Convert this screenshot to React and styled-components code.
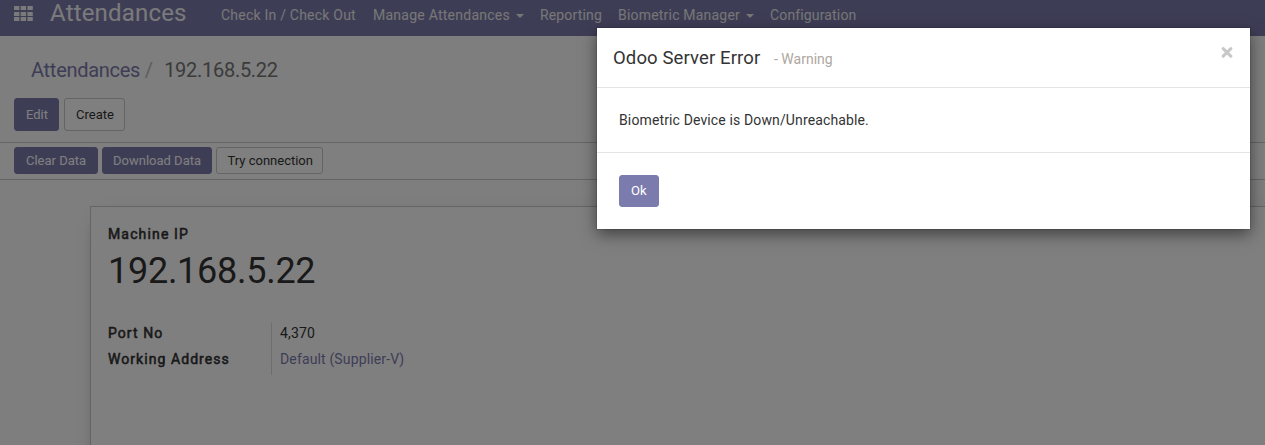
import React from "react";
import styled, { createGlobalStyle } from "styled-components";

const GlobalStyle = createGlobalStyle`
  * { box-sizing: border-box; }
  body {
    margin: 0;
    overflow: hidden;
    background: #fff;
    color: #333;
    font: 14px/20px Roboto, "Liberation Sans", sans-serif;
  }
`;

const Page = styled.div`
  height: 445px;
  overflow: hidden;
  display: flex;
  flex-direction: column;
`;

const Navbar = styled.nav`
  flex: none;
  height: 36px;
  padding-left: 14px;
  display: flex;
  align-items: flex-start;
  background: #7c7bad;
  color: #fff;
`;

const AppsIcon = styled.svg`
  width: 19px;
  height: 15px;
  margin: 6px 17px 0 0;
  fill: #f4f4f4;
`;

const Brand = styled.div`
  width: 171px;
  font-size: 24px;
  line-height: 26px;
  letter-spacing: 0.18px;
  color: #f4f4f4;
`;

const NavItem = styled.div`
  width: ${(p) => p.$width}px;
  flex: none;
  display: flex;
  align-items: center;
  line-height: 30px;
  letter-spacing: ${(p) => p.$spacing ?? 0.22}px;
  white-space: nowrap;
  color: #eeeeee;
`;

const Caret = styled.span`
  margin: 2px 0 0 6px;
  border: 4px solid transparent;
  border-top-color: currentColor;
  border-bottom: 0;
`;

const ControlPanel = styled.header`
  flex: none;
  height: 107px;
  padding: 21px 14px 0;
  background: #fcfcfc;
  border-bottom: 1px solid #cacaca;
`;

const Breadcrumb = styled.div`
  height: 41px;
  padding-left: 17px;
  display: flex;
  font-size: 20px;
  line-height: 26px;
  letter-spacing: -0.28px;
  color: #777;
`;

const Crumb = styled.span`
  color: #7c7bad;
`;

const Separator = styled.span`
  width: 24px;
  padding-left: 4.5px;
  color: #bbb;
`;

const ButtonRow = styled.div`
  display: flex;
  gap: ${(p) => p.$gap}px;
`;

const Button = styled.button`
  width: ${(p) => p.$width}px;
  height: ${(p) => p.$height}px;
  padding: 0 0 0 ${(p) => p.$inset ?? 11}px;
  text-align: left;
  border: 1px solid ${(p) => (p.$primary ? "#7c7bad" : "#c8c8c8")};
  border-radius: 3px;
  background: ${(p) => (p.$primary ? "#7c7bad" : "#fff")};
  color: ${(p) => (p.$primary ? "#fff" : "#333")};
  font: 13px/18px Roboto, "Liberation Sans", sans-serif;
  white-space: nowrap;
`;

const StatusBar = styled.div`
  flex: none;
  height: 37px;
  padding: 4px 14px 0;
  background: #fff;
  border-bottom: 1px solid #cacaca;
`;

const SheetArea = styled.main`
  flex: 1;
  padding: 26px 0 0 90px;
  background: #fcfcfc;
`;

const Sheet = styled.section`
  width: 1200px;
  height: 300px;
  padding: 17px;
  background: #fff;
  border: 1px solid #c8c8d3;
  box-shadow: 0 5px 20px -15px #000;
`;

const Label = styled.div`
  letter-spacing: ${(p) => p.$spacing ?? 1.06}px;
  color: #333;
  -webkit-text-stroke: 0.55px currentColor;
  white-space: nowrap;
`;

const Address = styled.h1`
  margin: 5px 0 29px;
  font-size: 36px;
  line-height: 45px;
  font-weight: 400;
  letter-spacing: -0.27px;
`;

const FieldGrid = styled.div`
  display: grid;
  grid-template-columns: 163px 1fr;
  height: 52px;
`;

const FieldColumn = styled.div`
  display: grid;
  grid-template-rows: 26px 26px;
  padding-left: ${(p) => (p.$divided ? 8 : 0)}px;
  border-left: ${(p) => (p.$divided ? "1px solid #ddd" : "0")};
  letter-spacing: 0.14px;
`;

const Link = styled.span`
  color: #7c7bad;
`;

const Backdrop = styled.div`
  position: absolute;
  inset: 0;
  height: 445px;
  overflow: hidden;
  background: rgba(0, 0, 0, 0.5);
`;

const Dialog = styled.div`
  position: absolute;
  left: 597px;
  top: 28px;
  width: 653px;
  height: 201px;
  background: #fff;
  box-shadow: 0 5px 15px rgba(0, 0, 0, 0.5), 0 0 0 1px rgba(0, 0, 0, 0.1);
`;

const DialogHeader = styled.div`
  display: flex;
  align-items: flex-start;
  height: 60px;
  padding: 16px 17px 0 16px;
  border-bottom: 1px solid #e5e5e5;
`;

const DialogTitle = styled.h4`
  width: 161px;
  margin: 0;
  font-size: 18.5px;
  line-height: 29px;
  font-weight: 400;
  letter-spacing: 0.12px;
  white-space: nowrap;
`;

const DialogSubtitle = styled.span`
  flex: 1;
  line-height: 30px;
  color: #aea79f;
`;

const CloseIcon = styled.svg`
  width: 12px;
  height: 12px;
  margin-top: 2px;
`;

const DialogBody = styled.div`
  height: 65px;
  padding: 22px;
  letter-spacing: 0.13px;
  border-bottom: 1px solid #e5e5e5;
`;

const DialogFooter = styled.div`
  padding: 22px;
`;

export default function App() {
  return (
    <>
      <GlobalStyle />
      <Page>
        <Navbar>
          <AppsIcon viewBox="0 0 19 15">
            {[0, 6.7, 13.4].map((x) =>
              [0, 6, 11].map((y) => (
                <rect key={`${x}-${y}`} x={x} y={y} width="5.4" height="4" rx="0.5" />
              ))
            )}
          </AppsIcon>
          <Brand>Attendances</Brand>
          <NavItem $width={152}>Check In / Check Out</NavItem>
          <NavItem $width={167} $spacing={0.25}>Manage Attendances<Caret /></NavItem>
          <NavItem $width={78} $spacing={0.15}>Reporting</NavItem>
          <NavItem $width={152} $spacing={0.2}>Biometric Manager<Caret /></NavItem>
          <NavItem $width={100} $spacing={0.15}>Configuration</NavItem>
        </Navbar>
        <ControlPanel>
          <Breadcrumb>
            <Crumb>Attendances</Crumb>
            <Separator>/</Separator>
            <span>192.168.5.22</span>
          </Breadcrumb>
          <ButtonRow $gap={5}>
            <Button $primary $width={45} $height={33}>Edit</Button>
            <Button $width={61} $height={33}>Create</Button>
          </ButtonRow>
        </ControlPanel>
        <StatusBar>
          <ButtonRow $gap={4}>
            <Button $primary $width={84} $height={27}>Clear Data</Button>
            <Button $primary $width={110} $height={27} $inset={10}>Download Data</Button>
            <Button $width={107} $height={27} $inset={10.5}>Try connection</Button>
          </ButtonRow>
        </StatusBar>
        <SheetArea>
          <Sheet>
            <Label $spacing={1.15}>Machine IP</Label>
            <Address>192.168.5.22</Address>
            <FieldGrid>
              <FieldColumn>
                <Label>Port No</Label>
                <Label>Working Address</Label>
              </FieldColumn>
              <FieldColumn $divided>
                <span>4,370</span>
                <Link>Default (Supplier-V)</Link>
              </FieldColumn>
            </FieldGrid>
          </Sheet>
        </SheetArea>
      </Page>
      <Backdrop>
        <Dialog role="dialog">
          <DialogHeader>
            <DialogTitle>Odoo Server Error</DialogTitle>
            <DialogSubtitle>- Warning</DialogSubtitle>
            <CloseIcon viewBox="0 0 12 12">
              <path d="M2.2 2.6L9.8 10.2M9.8 2.6L2.2 10.2" stroke="#c8c8c8" strokeWidth="3.1" strokeLinecap="round" />
            </CloseIcon>
          </DialogHeader>
          <DialogBody>Biometric Device is Down/Unreachable.</DialogBody>
          <DialogFooter>
            <Button $primary $width={40} $height={32}>Ok</Button>
          </DialogFooter>
        </Dialog>
      </Backdrop>
    </>
  );
}
